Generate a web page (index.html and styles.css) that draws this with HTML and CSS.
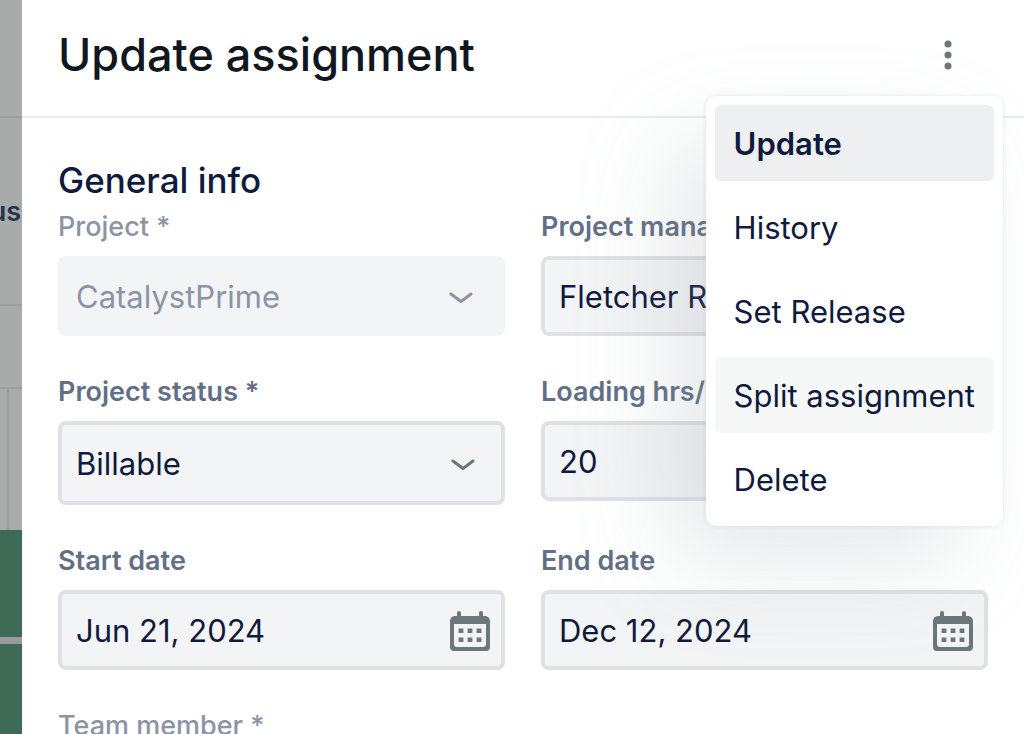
FILE: index.html
```html
<!DOCTYPE html>
<html lang="en">
<head>
    <meta charset="UTF-8">
    <meta name="viewport" content="width=device-width, initial-scale=1.0">
    <title>Update assignment</title>
    <link rel="stylesheet" href="styles.css">
</head>
<body>
    <div class="layout">
        <!-- Dimmed page behind the drawer -->
        <div class="backdrop">
            <div class="backdrop-top"></div>
            <div class="backdrop-head">us</div>
            <div class="backdrop-row"></div>
            <div class="backdrop-cell"></div>
            <div class="backdrop-bar"></div>
            <div class="backdrop-bar backdrop-bar-last"></div>
        </div>

        <main class="drawer">
            <header class="drawer-header">
                <h1>Update assignment</h1>
                <div class="actions">
                    <button class="btn-more" type="button" aria-label="More">
                        <svg width="8" height="32" viewBox="0 0 8 32" fill="currentColor">
                            <circle cx="4" cy="5" r="3.5"/>
                            <circle cx="4" cy="16" r="3.5"/>
                            <circle cx="4" cy="27" r="3.5"/>
                        </svg>
                    </button>
                    <div class="menu">
                        <button class="menu-item selected" type="button">Update</button>
                        <button class="menu-item" type="button">History</button>
                        <button class="menu-item" type="button">Set Release</button>
                        <button class="menu-item hovered" type="button">Split assignment</button>
                        <button class="menu-item" type="button">Delete</button>
                    </div>
                </div>
            </header>

            <form class="drawer-body">
                <h2>General info</h2>
                <div class="form-grid">
                    <div class="field disabled">
                        <label for="project">Project *</label>
                        <div class="control">
                            <select id="project" disabled>
                                <option>CatalystPrime</option>
                            </select>
                            <svg class="chevron" width="24" height="12" viewBox="0 0 24 12"><path d="M2 2 12 9.5 22 2"/></svg>
                        </div>
                    </div>
                    <div class="field">
                        <label for="manager">Project manager</label>
                        <div class="control">
                            <input id="manager" type="text" value="Fletcher R">
                        </div>
                    </div>

                    <div class="field">
                        <label for="status">Project status *</label>
                        <div class="control">
                            <select id="status" class="tall">
                                <option>Billable</option>
                            </select>
                            <svg class="chevron" width="24" height="12" viewBox="0 0 24 12"><path d="M2 2 12 9.5 22 2"/></svg>
                        </div>
                    </div>
                    <div class="field">
                        <label for="hours">Loading hrs/week</label>
                        <div class="control">
                            <input id="hours" type="text" value="20">
                        </div>
                    </div>

                    <div class="field">
                        <label for="start">Start date</label>
                        <div class="control">
                            <input id="start" type="text" value="Jun 21, 2024">
                            <button class="btn-calendar" type="button" aria-label="Choose start date">
                                <svg width="40" height="40" viewBox="0 0 40 40" fill="currentColor">
                                    <path fill-rule="evenodd" d="M9 0a2 2 0 0 1 2 2v3h18V2a2 2 0 0 1 4 0v3h2a5 5 0 0 1 5 5v26a4 4 0 0 1-4 4H4a4 4 0 0 1-4-4V10a5 5 0 0 1 5-5h2V2a2 2 0 0 1 2-2zM4 13v20a3 3 0 0 0 3 3h26a3 3 0 0 0 3-3V13z"/>
                                    <path d="M8.6 17.5h4.8v4.6H8.6zM17.6 17.5h4.8v4.6h-4.8zM26.6 17.5h4.8v4.6h-4.8zM8.6 26.5h4.8v4.6H8.6zM17.6 26.5h4.8v4.6h-4.8zM26.6 26.5h4.8v4.6h-4.8z"/>
                                </svg>
                            </button>
                        </div>
                    </div>
                    <div class="field">
                        <label for="end">End date</label>
                        <div class="control">
                            <input id="end" type="text" value="Dec 12, 2024">
                            <button class="btn-calendar" type="button" aria-label="Choose end date">
                                <svg width="40" height="40" viewBox="0 0 40 40" fill="currentColor">
                                    <path fill-rule="evenodd" d="M9 0a2 2 0 0 1 2 2v3h18V2a2 2 0 0 1 4 0v3h2a5 5 0 0 1 5 5v26a4 4 0 0 1-4 4H4a4 4 0 0 1-4-4V10a5 5 0 0 1 5-5h2V2a2 2 0 0 1 2-2zM4 13v20a3 3 0 0 0 3 3h26a3 3 0 0 0 3-3V13z"/>
                                    <path d="M8.6 17.5h4.8v4.6H8.6zM17.6 17.5h4.8v4.6h-4.8zM26.6 17.5h4.8v4.6h-4.8zM8.6 26.5h4.8v4.6H8.6zM17.6 26.5h4.8v4.6h-4.8zM26.6 26.5h4.8v4.6h-4.8z"/>
                                </svg>
                            </button>
                        </div>
                    </div>

                    <div class="field disabled">
                        <label for="member">Team member *</label>
                        <div class="control">
                            <select id="member" disabled></select>
                        </div>
                    </div>
                </div>
            </form>
        </main>
    </div>
</body>
</html>
```
FILE: styles.css
```css
:root {
    --text: #0f1a3c;
    --label: #626f86;
    --muted: #8c94a4;
    --icon: #6b7778;
    --field: #f3f4f6;
    --border: #dfe1e5;
}

* {
    margin: 0;
    padding: 0;
    box-sizing: border-box;
}

body {
    font-family: Inter, "Liberation Sans", sans-serif;
    color: var(--text);
    background: #fff;
    overflow: hidden;
}

.layout {
    display: flex;
    height: 100vh;
}

/* Backdrop */
.backdrop {
    flex: 0 0 22px;
    display: flex;
    flex-direction: column;
    background: #a9abaa;
    overflow: hidden;
}

.backdrop-top {
    height: 118px;
    border-bottom: 2px solid #9d9f9f;
}

.backdrop-head {
    display: flex;
    align-items: center;
    justify-content: flex-end;
    height: 188px;
    padding-right: 1px;
    border-bottom: 2px solid #9d9f9f;
    font-size: 27px;
    font-weight: 600;
    color: #27324e;
}

.backdrop-row {
    height: 83px;
    border-bottom: 2px solid #9d9f9f;
}

.backdrop-cell {
    height: 141px;
    margin-left: 7px;
    border-left: 2px solid #9d9f9f;
}

.backdrop-bar {
    height: 107px;
    background: #3f6a55;
}

.backdrop-bar-last {
    flex: 1;
    border-top: 7px solid #9a9b9b;
}

/* Drawer */
.drawer {
    flex: 1;
    min-width: 0;
    background: #fff;
}

.drawer-header {
    display: flex;
    align-items: center;
    justify-content: space-between;
    height: 118px;
    padding: 0 36px 6px;
    border-bottom: 2px solid #e9ebec;
}

h1 {
    font-size: 45px;
    line-height: 56px;
    font-weight: 500;
    color: #10171e;
}

h2 {
    font-size: 35px;
    line-height: 44px;
    font-weight: 500;
    margin-bottom: 9px;
}

button {
    border: none;
    background: none;
    font: inherit;
    color: inherit;
    cursor: pointer;
}

.actions {
    position: relative;
}

.btn-more {
    display: flex;
    align-items: center;
    justify-content: center;
    width: 80px;
    height: 80px;
    color: var(--icon);
}

.menu {
    position: absolute;
    z-index: 1;
    top: 81px;
    right: -15px;
    display: flex;
    flex-direction: column;
    gap: 8px;
    padding: 9px;
    background: #fff;
    border-radius: 10px;
    box-shadow: 0 0 4px rgba(145, 158, 171, 0.24), -40px 40px 100px -8px rgba(135, 145, 150, 0.22);
}

.menu-item {
    height: 76px;
    padding: 0 19px;
    border-radius: 6px;
    font-size: 31px;
    text-align: left;
    white-space: nowrap;
}

.menu-item.hovered {
    background: #f6f8f8;
}

.menu-item.selected {
    background: #eeeff1;
    font-weight: 600;
}

/* Form */
.drawer-body {
    padding: 40px 36px;
}

.form-grid {
    display: grid;
    grid-template-columns: 1fr 1fr;
    gap: 40px 36px;
}

.field {
    display: flex;
    flex-direction: column;
    gap: 13px;
}

.field label {
    font-size: 27px;
    line-height: 32px;
    font-weight: 600;
    color: var(--label);
}

.control {
    position: relative;
}

.control input,
.control select {
    display: block;
    width: 100%;
    height: 80px;
    padding: 0 14px;
    border: 4px solid var(--border);
    border-radius: 8px;
    background: var(--field);
    font: inherit;
    font-size: 31px;
    color: inherit;
    appearance: none;
    outline: none;
}

.control select.tall {
    height: 84px;
}

.field.disabled label {
    color: var(--muted);
    font-weight: 500;
}

.field.disabled select {
    border-color: var(--field);
    color: var(--muted);
    opacity: 1;
}

.chevron {
    position: absolute;
    top: 50%;
    right: 30px;
    margin-top: -4px;
    fill: none;
    stroke: var(--icon);
    stroke-width: 3;
    stroke-linecap: round;
    stroke-linejoin: round;
    pointer-events: none;
}

.field.disabled .chevron {
    right: 32px;
    stroke: var(--muted);
}

.btn-calendar {
    position: absolute;
    top: 21px;
    right: 15px;
    display: flex;
    color: var(--icon);
}
```
